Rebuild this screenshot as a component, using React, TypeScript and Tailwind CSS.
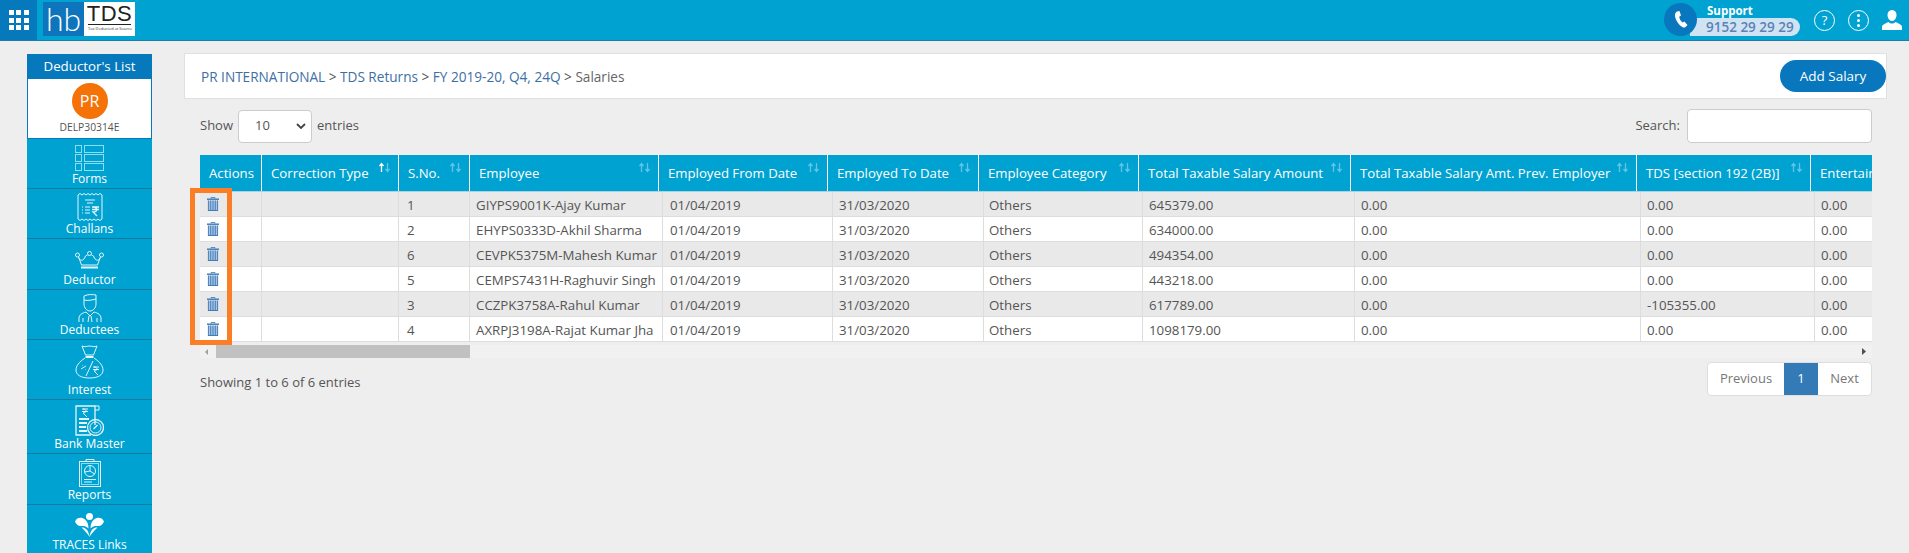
import type { ReactNode } from 'react'

const headCols = ['w-[62px]', 'w-[137px]', 'w-[71px]', 'w-[189px]', 'w-[169px]', 'w-[151px]', 'w-[160px]', 'w-[212px]', 'w-[286px]', 'w-[174px]', 'w-[220px]']
const bodyCols = ['w-[62px]', 'w-[137px]', 'w-[71px]', 'w-[193px]', 'w-[170px]', 'w-[151px]', 'w-[159px]', 'w-[212px]', 'w-[286px]', 'w-[174px]', 'w-[220px]']

const headers = [
  'Actions',
  'Correction Type',
  'S.No.',
  'Employee',
  'Employed From Date',
  'Employed To Date',
  'Employee Category',
  'Total Taxable Salary Amount',
  'Total Taxable Salary Amt. Prev. Employer',
  'TDS [section 192 (2B)]',
  'Entertainment Allowance',
]

const rows = [
  ['1', 'GIYPS9001K-Ajay Kumar', '645379.00', '0.00'],
  ['2', 'EHYPS0333D-Akhil Sharma', '634000.00', '0.00'],
  ['6', 'CEVPK5375M-Mahesh Kumar', '494354.00', '0.00'],
  ['5', 'CEMPS7431H-Raghuvir Singh', '443218.00', '0.00'],
  ['3', 'CCZPK3758A-Rahul Kumar', '617789.00', '-105355.00'],
  ['4', 'AXRPJ3198A-Rajat Kumar Jha', '1098179.00', '0.00'],
]

function SortIcon({ active }: { active?: boolean }) {
  return (
    <svg width="13" height="11" viewBox="0 0 13 11" className="absolute right-[7px] top-[7px]">
      <path d="M3.5 10V2M1.5 4l2-2.5 2 2.500" fill="none" stroke={active ? '#ffffff' : '#62c5e4'} strokeWidth="1.3" />
      <path d="M9.5 1v8M7.5 7l2 2.5 2-2.500" fill="none" stroke="#62c5e4" strokeWidth="1.3" />
    </svg>
  )
}

function TrashIcon() {
  return (
    <svg width="12" height="14" viewBox="0 0 12 14" className="block">
      <path d="M4 1.500V.5h4v1" fill="none" stroke="#3b78b5" strokeWidth="0.8" />
      <rect x="0" y="1.500" width="12" height="1.400" fill="#3b78b5" />
      <rect x="1" y="3.500" width="10" height="10.500" fill="#a9c4e0" />
      <path d="M1.400 3.500V14M3.700 3.500V14M6 3.500V14M8.300 3.500V14M10.600 3.500V14M1 13.500h10" stroke="#3b78b5" strokeWidth="0.9" />
    </svg>
  )
}

function FormsIcon() {
  return (
    <svg width="29" height="26" viewBox="0 0 29 26" fill="none" stroke="#8edcf2" strokeWidth="1">
      <rect x="0.5" y="0.5" width="6" height="7" />
      <rect x="9.5" y="0.5" width="19" height="7" />
      <rect x="0.5" y="9.5" width="6" height="7" />
      <rect x="9.5" y="9.5" width="19" height="7" />
      <rect x="0.5" y="18.5" width="6" height="7" />
      <rect x="9.5" y="18.5" width="19" height="7" />
    </svg>
  )
}

function ChallanIcon() {
  return (
    <svg width="26" height="28" viewBox="0 0 26 28" fill="none" stroke="#e4f6fb" strokeWidth="1">
      <path d="M1 2l2-1.500 2 1.500 2-1.500 2 1.500 2-1.500 2 1.500 2-1.500 2 1.500 2-1.500 2 1.500 2-1.500 2 1.500v24l-2 1.500-2-1.500-2 1.500-2-1.500-2 1.500-2-1.500-2 1.500-2-1.500-2 1.500-2-1.500-2 1.500-2-1.500z" />
      <path d="M8 7h10M10 10h6" />
      <path d="M5 14h1M5 17h1M5 20h1M8 14h5M8 17h5M8 20h5" />
      <path d="M15 14h7M15 16.500h7M16 14c5 0 5 5 0 5l4 4" strokeWidth="1.3" />
    </svg>
  )
}

function CrownIcon() {
  return (
    <svg width="29" height="18" viewBox="0 0 29 18" fill="none" stroke="#e4f6fb" strokeWidth="1">
      <circle cx="2.5" cy="4" r="2" />
      <circle cx="14.5" cy="2.5" r="2" />
      <circle cx="26.5" cy="4" r="2" />
      <path d="M3.500 6c1 4 5 5 7-1l2-1M25.500 6c-1 4-5 5-7-1l-2-1M4 7l2.500 7h16L25 7" />
      <path d="M6 16.500h17" strokeWidth="2" />
    </svg>
  )
}

function ManIcon() {
  return (
    <svg width="24" height="28" viewBox="0 0 24 28" fill="none" stroke="#e4f6fb" strokeWidth="1">
      <path d="M6 2c4-2 9-1.500 12-1v9c0 4-3 7-6 7s-6-3-6-7z" />
      <path d="M6 6c4 1 8 0 12-1" />
      <path d="M1 28v-4c0-3 3-5 7-6l4 4 4-4c4 1 7 3 7 6v4" />
      <path d="M5 28v-4M19 28v-4M11 22l-1 6M13 22l1 6" />
    </svg>
  )
}

function BagIcon() {
  return (
    <svg width="29" height="34" viewBox="0 0 29 34" fill="none" stroke="#e4f6fb" strokeWidth="1">
      <path d="M7 1c3 1.500 5 0 7.500 0s5 1.500 7.500 0l-3.500 9h-8z" />
      <path d="M10.500 12h8" strokeWidth="2" />
      <path d="M10 13C4 17 1 21 1 25c0 5 5 8 13.500 8S28 30 28 25c0-4-3-8-9-12" />
      <path d="M18 16l-7 15" />
      <path d="M6 24l5-3M7 20.500h.5M10 24.500h.5" />
      <path d="M18 22h6M18 24.500h6M19 22c4 0 4 4 0 4l4 4" />
    </svg>
  )
}

function BankIcon() {
  return (
    <svg width="29" height="31" viewBox="0 0 29 31" fill="none" stroke="#e4f6fb" strokeWidth="1">
      <path d="M20 20V1H1v29h15" strokeWidth="1.300" />
      <path d="M20 1h4v4h-4" />
      <path d="M7 4h6M7 6.500h6M8 4c4 0 4 4 0 4l4 4" />
      <path d="M4 14h10M4 18h8M4 22h7M4 26h8" strokeWidth="2.200" />
      <circle cx="20.500" cy="22.500" r="8" strokeWidth="1.300" />
      <circle cx="20.500" cy="22.500" r="5.500" />
      <path d="M18.500 24l4-4" strokeWidth="1.300" />
    </svg>
  )
}

function ReportIcon() {
  return (
    <svg width="22" height="28" viewBox="0 0 22 28" fill="none" stroke="#e4f6fb" strokeWidth="1">
      <rect x="0.500" y="2.500" width="21" height="25" />
      <rect x="2.500" y="4.500" width="17" height="21" stroke="#8edcf2" />
      <path d="M7 2.500V.5h8v2" />
      <circle cx="11" cy="12" r="5.500" />
      <path d="M11 6.500V12l4.500 3M11 12l-5 1" />
      <path d="M5 20.500h12M5 23h8" />
    </svg>
  )
}

function TracesIcon() {
  return (
    <svg width="29" height="24" viewBox="0 0 29 24" fill="#ffffff">
      <circle cx="14.500" cy="3.500" r="3.500" />
      <path d="M0 8.500C2 4 7 4 10 6.500c2.500 2 3.500 5 3.500 9-3-3-5-2.500-8-2.500C3 13 1 11 0 8.500z" />
      <path d="M29 8.500C27 4 22 4 19 6.500c-2.500 2-3.500 5-3.500 9 3-3 5-2.500 8-2.500 2.500 0 4.500-2 5.500-4.500z" />
      <path d="M6.500 14.500c3.500 0 7 1.500 8 9.500-1.500-3-4.500-6-8-9.500zM22.500 14.500c-3.500 0-7 1.500-8 9.500 1.500-3 4.500-6 8-9.500z" />
    </svg>
  )
}

function SideItem({ icon, label, className }: { icon: ReactNode; label: string; className: string }) {
  return (
    <div className={`flex flex-col items-center justify-end border-b border-[#17789c] pb-[1px] ${className}`}>
      {icon}
      <span className="text-[12px] leading-[16px] text-white">{label}</span>
    </div>
  )
}

function Sidebar() {
  return (
    <aside className="ml-[27px] mt-[13px] flex w-[125px] flex-col bg-[#00a2d1]">
      <div className="h-[25px] bg-[#0679bd] text-center text-[13.3px] leading-[25px] text-white">Deductor's List</div>
      <div className="flex h-[60px] flex-col items-center border-x border-b border-[#0679bd] bg-white pt-[4px]">
        <div className="flex h-[36px] w-[36px] items-center justify-center rounded-full bg-[#f57208] text-[16px] text-white">PR</div>
        <span className="mt-[1px] text-[10.3px] font-medium leading-[15px] text-[#555555]">DELP30314E</span>
      </div>
      <SideItem className="h-[50px]" icon={<FormsIcon />} label="Forms" />
      <SideItem className="h-[50px]" icon={<ChallanIcon />} label="Challans" />
      <SideItem className="h-[51px]" icon={<div className="mb-[3px]"><CrownIcon /></div>} label="Deductor" />
      <SideItem className="h-[50px]" icon={<ManIcon />} label="Deductees" />
      <SideItem className="h-[60px]" icon={<div className="mb-[3px]"><BagIcon /></div>} label="Interest" />
      <SideItem className="h-[54px]" icon={<BankIcon />} label="Bank Master" />
      <SideItem className="h-[51px]" icon={<ReportIcon />} label="Reports" />
      <SideItem className="h-[49px] border-b-0" icon={<TracesIcon />} label="TRACES Links" />
    </aside>
  )
}

function TopBar() {
  return (
    <header className="flex h-[41px] items-stretch border-b border-[#1c7ea3] bg-[#00a2d1]">
      <div className="flex w-[37px] items-center justify-center bg-[#0679bd]">
        <div className="grid grid-cols-3 gap-[2.5px]">
          {Array.from({ length: 9 }).map((_, i) => (
            <span key={i} className="h-[5px] w-[5px] bg-white" />
          ))}
        </div>
      </div>
      <div className="ml-[6px] mt-[2px] flex h-[34px] w-[92px]">
        <div className="flex w-[41px] items-center justify-center bg-[#0e74bc] font-['Lato',sans-serif] text-[32px] font-light leading-none text-white">hb</div>
        <div className="flex w-[51px] flex-col items-center bg-white pt-[1px]">
          <span className="font-['Liberation_Sans',sans-serif] text-[22px] leading-[21px] tracking-[0.5px] text-[#222222]">TDS</span>
          <span className="w-[43px] border-t border-[#222222] pt-[1px] text-center text-[4px] leading-[6px] whitespace-nowrap text-[#333333]">Tax Deducted at Source</span>
        </div>
      </div>
      <div className="ml-auto flex items-center pr-[7px]">
        <div className="relative h-[41px] w-[136px]">
          <div className="absolute left-[26px] top-[18px] h-[18px] w-[110px] rounded-r-full bg-[#cfe3f3] pl-[16px] text-[13.5px] font-semibold leading-[18px] text-[#5b82b5]">9152 29 29 29</div>
          <div className="absolute left-0 top-[3px] flex h-[33px] w-[33px] items-center justify-center rounded-full bg-[#0877bd]">
            <svg width="14" height="17" viewBox="0 0 14 17" fill="#ffffff">
              <path d="M3 .5 5.500 0l1.500 4.500-1.800 1.200c.2 2 1.600 4.500 3.300 5.700l1.800-1L13.500 14l-2 2c-1 1-3 .8-5-1.200C3 11.500.5 6.500 1 3.500 1.200 2 2 1 3 .5z" />
            </svg>
          </div>
          <span className="absolute left-[43px] top-[3px] text-[11.5px] font-bold leading-[15px] text-white">Support</span>
        </div>
        <div className="ml-[14px] flex h-[21px] w-[21px] items-center justify-center rounded-full border border-white text-[13px] leading-none text-white">?</div>
        <div className="ml-[13px] flex h-[21px] w-[21px] flex-col items-center justify-center gap-[2px] rounded-full border border-white">
          <span className="h-[3px] w-[3px] rounded-full bg-white" />
          <span className="h-[3px] w-[3px] rounded-full bg-white" />
          <span className="h-[3px] w-[3px] rounded-full bg-white" />
        </div>
        <svg className="ml-[13px]" width="20" height="20" viewBox="0 0 20 20" fill="#ffffff">
          <path d="M10 0c3 0 4.500 2.200 4.500 5S12.800 11 10 11 5.500 7.800 5.500 5 7 0 10 0z" />
          <path d="M0 20v-3c0-2 3-3.500 6.500-5 1 1 2.200 1.500 3.500 1.500s2.500-.5 3.500-1.500c3.500 1.500 6.500 3 6.500 5v3z" />
        </svg>
      </div>
    </header>
  )
}

function SalaryTable() {
  return (
    <div className="mt-[12px] w-[1672px] overflow-hidden">
      <table className="w-[1831px] table-fixed border-separate border-spacing-0">
        <colgroup>
          {headCols.map((c, i) => (
            <col key={i} className={c} />
          ))}
        </colgroup>
        <thead>
          <tr className="h-[36px]">
            {headers.map((h, i) => (
              <th key={h} className="relative overflow-hidden border-r border-white bg-[#00a2d1] pl-[9px] pt-[2px] text-left text-[13.2px] font-normal whitespace-nowrap text-white">
                {h}
                {i > 0 && <SortIcon active={i === 1} />}
              </th>
            ))}
          </tr>
        </thead>
      </table>
      <div className="h-[1px] bg-[#a8d4e6]" />
      <table className="w-[1835px] table-fixed border-separate border-spacing-0">
        <colgroup>
          {bodyCols.map((c, i) => (
            <col key={i} className={c} />
          ))}
        </colgroup>
        <tbody>
          {rows.map((r, i) => (
            <tr key={r[0]} className={`h-[25px] text-[13.3px] leading-[18px] text-[#555555] ${i % 2 === 0 ? 'bg-[#e9e9e9]' : 'bg-white'}`}>
              <td className="border-r border-b border-[#dddddd] pl-[7px]"><TrashIcon /></td>
              <td className="border-r border-b border-[#dddddd]" />
              <td className="border-r border-b border-[#dddddd] pl-[8px] pt-[2px]">{r[0]}</td>
              <td className="border-r border-b border-[#dddddd] pl-[6px] pt-[2px] whitespace-nowrap">{r[1]}</td>
              <td className="border-r border-b border-[#dddddd] pl-[7px] pt-[2px]">01/04/2019</td>
              <td className="border-r border-b border-[#dddddd] pl-[6px] pt-[2px]">31/03/2020</td>
              <td className="border-r border-b border-[#dddddd] pl-[5px] pt-[2px]">Others</td>
              <td className="border-r border-b border-[#dddddd] pl-[6px] pt-[2px]">{r[2]}</td>
              <td className="border-r border-b border-[#dddddd] pl-[6px] pt-[2px]">0.00</td>
              <td className="border-r border-b border-[#dddddd] pl-[6px] pt-[2px]">{r[3]}</td>
              <td className="border-b border-[#dddddd] pl-[6px] pt-[2px]">0.00</td>
            </tr>
          ))}
        </tbody>
      </table>
      <div className="mt-[3px] flex h-[13px] items-center bg-[#f1f1f1]">
        <svg className="ml-[5px] mr-[8px]" width="3" height="6" viewBox="0 0 3 6" fill="#a0a0a0"><path d="M3 0v6L0 3z" /></svg>
        <div className="h-[13px] w-[254px] bg-[#c1c1c1]" />
        <svg className="ml-auto mr-[6px]" width="4" height="7" viewBox="0 0 4 7" fill="#505050"><path d="M0 0v7l4-3.500z" /></svg>
      </div>
    </div>
  )
}

export default function App() {
  return (
    <div className="h-[553px] w-[1909px] overflow-hidden bg-[#eeeeee] font-['Open_Sans',sans-serif] text-[13px] text-[#555555]">
      <TopBar />
      <div className="flex">
        <Sidebar />
        <main className="relative ml-[32px] w-[1703px] pt-[12px]">
          <div className="flex h-[46px] items-center justify-between border border-[#e0e0e0] bg-white pl-[16px]">
            <div className="pt-[2px] text-[13.6px] text-[#3d6fa5]">
              PR INTERNATIONAL <span className="text-[#555555]">&gt;</span> TDS Returns <span className="text-[#555555]">&gt;</span> FY 2019-20, Q4, 24Q <span className="text-[#555555]">&gt;</span> <span className="text-[#666666]">Salaries</span>
            </div>
            <button className="h-[32px] w-[106px] rounded-full bg-[#0877bd] text-[13.5px] text-white">Add Salary</button>
          </div>
          <div className="pl-[16px] pr-[15px]">
            <div className="mt-[10px] flex items-center justify-between">
              <div className="flex items-center gap-[5px]">
                <span>Show</span>
                <div className="flex h-[33px] w-[74px] items-center justify-between rounded-[4px] border border-[#cccccc] bg-white pl-[16px] pr-[5px]">
                  <span>10</span>
                  <svg width="10" height="6" viewBox="0 0 10 6" fill="none" stroke="#444444" strokeWidth="1.800"><path d="M1 1l4 4 4-4" /></svg>
                </div>
                <span>entries</span>
              </div>
              <div className="flex items-center gap-[7px]">
                <span>Search:</span>
                <div className="h-[34px] w-[185px] rounded-[4px] border border-[#cccccc] bg-white" />
              </div>
            </div>
            <SalaryTable />
            <div className="mt-[4px] flex items-start justify-between">
              <span className="pt-[11px] leading-[18px]">Showing 1 to 6 of 6 entries</span>
              <div className="flex h-[34px] overflow-hidden rounded-[4px] border border-[#dddddd] bg-white text-[13px] text-[#777777]">
                <span className="flex w-[76px] items-center justify-center">Previous</span>
                <span className="flex w-[34px] items-center justify-center bg-[#337ab7] text-white">1</span>
                <span className="flex w-[53px] items-center justify-center">Next</span>
              </div>
            </div>
          </div>
          <div className="absolute left-[6px] top-[147px] h-[157px] w-[42px] border-[5px] border-[#fb7d25]" />
        </main>
      </div>
    </div>
  )
}
